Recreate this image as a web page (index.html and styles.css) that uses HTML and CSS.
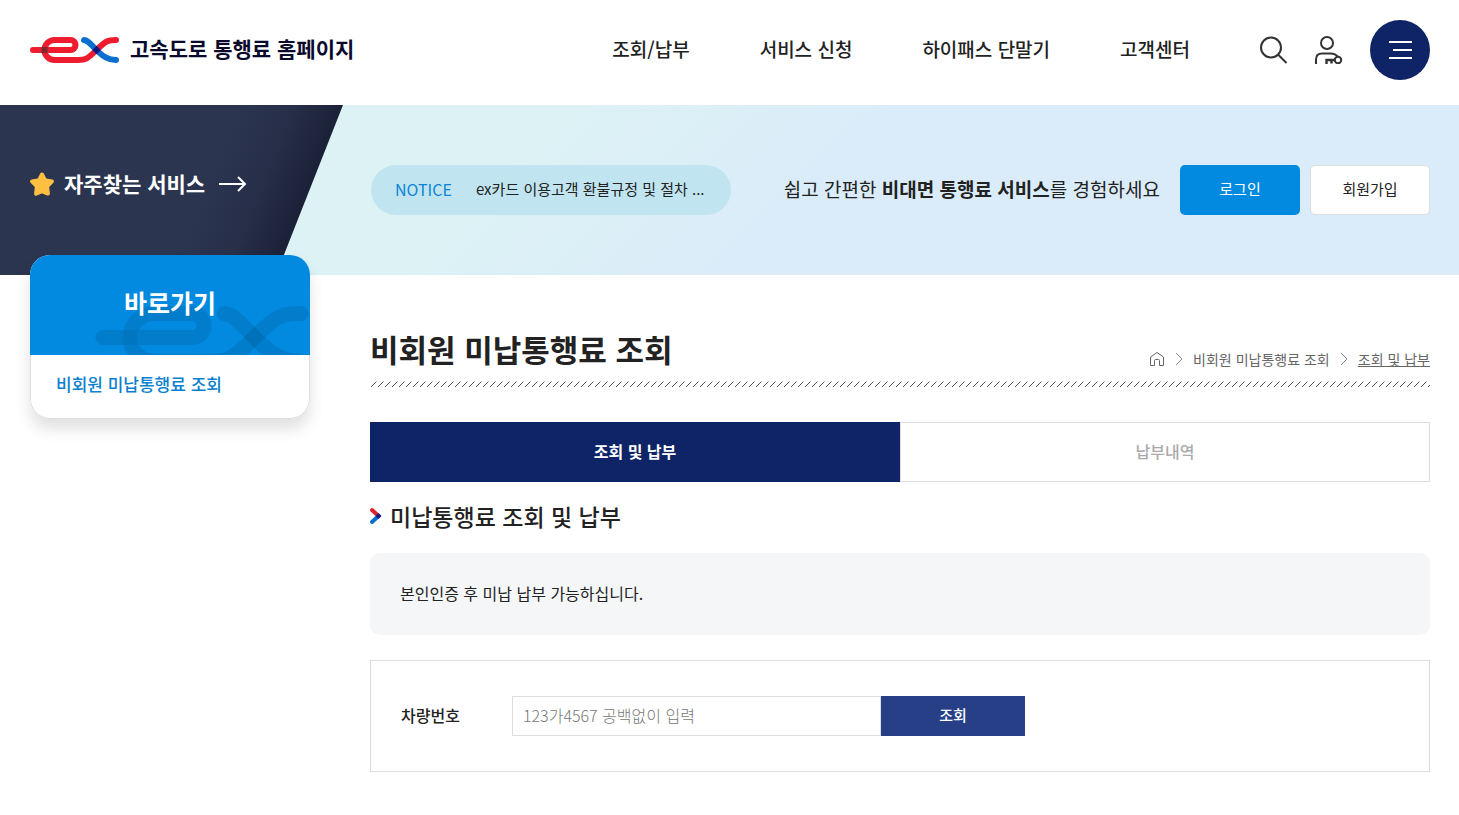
FILE: index.html
```html
<!DOCTYPE html>
<html lang="ko">
  <head>
    <meta charset="UTF-8" />
    <meta name="viewport" content="width=device-width, initial-scale=1.0" />
    <title>고속도로 통행료 홈페이지</title>
    <link rel="stylesheet" href="styles.css">
  </head>
  <body>
    <header class="header">
      <a href="#" class="logo">
        <svg class="logo-mark" viewBox="0 0 90 28" aria-hidden="true">
          <g fill="none" stroke-width="6" stroke-linecap="round">
            <path stroke="#ee1c2e" d="M3 14H40.500a5 5 0 0 0 0-10H24.500a10 10 0 0 0 0 20H48C55 24 57 23.500 66.500 14S78 4 86 4" />
            <path stroke="#0b6fd0" d="M54 4C58 4.500 60 7.500 66.500 14S78 24 86 24" />
          </g>
          <path fill="#7c2630" d="M11.500 11h6v6h-6z" />
          <path fill="#14147c" d="M66.500 9.800l4.200 4.200-4.200 4.300-4.200-4.300z" />
        </svg>
        <span>고속도로 통행료 홈페이지</span>
      </a>
      <nav class="nav">
        <a href="#">조회/납부</a>
        <a href="#">서비스 신청</a>
        <a href="#">하이패스 단말기</a>
        <a href="#">고객센터</a>
      </nav>
      <div class="tools">
        <button type="button" class="icon-btn" aria-label="검색">
          <svg width="28" height="28" viewBox="0 0 28 28" fill="none" stroke="#333" stroke-width="2">
            <circle cx="11" cy="11.500" r="10" />
            <path d="M18 18.500L26.500 27" />
          </svg>
        </button>
        <button type="button" class="icon-btn" aria-label="로그인">
          <svg width="28" height="28" viewBox="0 0 28 28" fill="none" stroke="#333" stroke-width="2">
            <circle cx="12" cy="7" r="6" />
            <path d="M1 28v-4.500Q1 17.500 7 17.500h8.500q5 0 7.500 3.500" />
            <circle cx="23" cy="24" r="3.200" />
            <path d="M20 24h-8.500v4M16.500 24v3.500" stroke-width="2.400" />
          </svg>
        </button>
        <button type="button" class="menu-btn" aria-label="전체메뉴">
          <svg width="24" height="18" viewBox="0 0 24 18" stroke="#fff" stroke-width="2">
            <path d="M1 1h23M5 9h19M1 17h23" />
          </svg>
        </button>
      </div>
    </header>

    <section class="banner">
      <a href="#" class="favorite">
        <svg width="24" height="24" viewBox="0 0 24 24" aria-hidden="true">
          <path fill="#ffbf43" stroke="#ffbf43" stroke-width="4" stroke-linejoin="round" d="M12 2.500l2.900 5.700 7 1.200-4.800 5 .8 7.200-5.900-2.500-5.900 2.500.8-7.200-4.800-5 7-1.200z" />
        </svg>
        <span>자주찾는 서비스</span>
        <svg class="arrow" width="28" height="16" viewBox="0 0 28 16" fill="none" stroke="#fff" stroke-width="2" aria-hidden="true">
          <path d="M0 8h26M19 1l7 7-7 7" />
        </svg>
      </a>
      <a href="#" class="notice">
        <span class="notice-label">NOTICE</span>
        <span class="notice-text">ex카드 이용고객 환불규정 및 절차 ...</span>
      </a>
      <div class="member">
        <p>쉽고 간편한 <strong>비대면 통행료 서비스</strong>를 경험하세요</p>
        <button type="button" class="btn btn-login">로그인</button>
        <button type="button" class="btn btn-join">회원가입</button>
      </div>
    </section>

    <div class="container">
      <aside class="side">
        <div class="side-title">
          <svg class="side-mark" viewBox="0 0 90 28" aria-hidden="true">
            <g fill="none" stroke="#000" stroke-opacity="0.090" stroke-width="6.300" stroke-linecap="round">
              <path d="M3.200 14H40.500a5 5 0 0 0 0-10H24.500a10 10 0 0 0 0 20H48C55 24 57 23.500 66.500 14S78 4 86 4" />
              <path d="M54 4C58 4.500 60 7.500 66.500 14S78 24 86 24" />
            </g>
            <path fill-opacity="0.060" d="M11.500 11h6v6h-6z" />
          </svg>
          <h2>바로가기</h2>
        </div>
        <ul class="side-menu">
          <li><a href="#">비회원 미납통행료 조회</a></li>
        </ul>
      </aside>

      <main class="content">
        <div class="page-head">
          <h1>비회원 미납통행료 조회</h1>
          <nav class="breadcrumb">
            <a href="#" aria-label="홈">
              <svg width="16" height="16" viewBox="0 0 16 16" fill="none" stroke="#666">
                <path d="M1.500 6L8 1.500 14.500 6v8.500h-4V9.500q0-1-1-1h-3q-1 0-1 1v5h-4z" />
              </svg>
            </a>
            <svg width="8" height="14" viewBox="0 0 8 14" fill="none" stroke="#888" aria-hidden="true"><path d="M1 1l6 6-6 6" /></svg>
            <a href="#">비회원 미납통행료 조회</a>
            <svg width="8" height="14" viewBox="0 0 8 14" fill="none" stroke="#888" aria-hidden="true"><path d="M1 1l6 6-6 6" /></svg>
            <a href="#" class="current">조회 및 납부</a>
          </nav>
        </div>
        <svg class="hatch" aria-hidden="true">
          <defs>
            <pattern id="hatch" width="7" height="6" patternUnits="userSpaceOnUse">
              <path d="M0.500 6.500L6.500 0.500" stroke="#555" />
            </pattern>
          </defs>
          <rect width="100%" height="6" fill="url(#hatch)" />
        </svg>

        <div class="tabs">
          <button type="button" class="tab active">조회 및 납부</button>
          <button type="button" class="tab">납부내역</button>
        </div>

        <h3 class="section-title">
          <svg width="12" height="18" viewBox="0 0 12 18" fill="none" stroke-width="4" aria-hidden="true">
            <path stroke="#e0202f" stroke-linecap="round" d="M2 3l6.500 6" />
            <path stroke="#0b6fd0" stroke-linecap="round" d="M2 15l6.500-6" />
            <path fill="#1a1a80" d="M8.500 6l3 3-3 3-3-3z" />
          </svg>
          미납통행료 조회 및 납부
        </h3>

        <p class="guide">본인인증 후 미납 납부 가능하십니다.</p>

        <form class="search">
          <label for="car-number">차량번호</label>
          <input type="text" id="car-number" name="carNumber" placeholder="123가4567 공백없이 입력" />
          <button type="button">조회</button>
        </form>
      </main>
    </div>
  </body>
</html>
```
FILE: styles.css
```css
/* Reset styles */
*,
*::before,
*::after {
  margin: 0;
  padding: 0;
  box-sizing: border-box;
}

body {
  font-family: "Noto Sans CJK KR", sans-serif;
  font-size: 16px;
  line-height: 24px;
  color: #222;
  background-color: #fff;
}

a {
  color: inherit;
  text-decoration: none;
}

button,
input {
  font-family: inherit;
  font-size: 16px;
}

button {
  border: none;
  background: none;
  cursor: pointer;
}

svg {
  display: block;
  flex-shrink: 0;
}

/* Header */
.header {
  display: flex;
  align-items: center;
  height: 105px;
  padding: 0 29px 5px 30px;
}

.logo {
  display: flex;
  align-items: center;
  gap: 10px;
  font-size: 21px;
  font-weight: 700;
  color: #0a0a2c;
}

.logo span {
  padding-bottom: 4px;
}

.logo-mark {
  width: 90px;
  height: 28px;
}

.nav {
  display: flex;
  gap: 70px;
  margin-left: auto;
  padding-bottom: 2px;
  font-size: 19px;
  font-weight: 500;
}

.tools {
  display: flex;
  align-items: center;
  gap: 27px;
  margin-left: 70px;
}

.menu-btn {
  display: flex;
  align-items: center;
  justify-content: center;
  width: 60px;
  height: 60px;
  border-radius: 50%;
  background-color: #0f2466;
}

/* Banner */
.banner {
  display: flex;
  align-items: center;
  height: 170px;
  padding-right: 29px;
  background: linear-gradient(135deg, #dcf2f5 35%, #daecf9 55%);
}

.favorite {
  display: flex;
  align-items: center;
  gap: 10px;
  width: 343px;
  height: 170px;
  padding: 0 0 12px 30px;
  font-size: 21px;
  font-weight: 700;
  color: #fff;
  background: linear-gradient(112deg, #2c3550 58%, #262e48 72%, #1a2036 84%);
  clip-path: polygon(0 0, 100% 0, 276px 100%, 0 100%);
}

.favorite span {
  padding-bottom: 2px;
}

.arrow {
  margin-left: 4px;
}

.notice {
  display: flex;
  align-items: center;
  gap: 24px;
  width: 360px;
  height: 50px;
  margin-left: 28px;
  padding: 0 24px 2px;
  border-radius: 25px;
  background-color: #c1e5f0;
}

.notice-label {
  color: #0a84d6;
}

.notice-text {
  font-size: 15px;
  white-space: nowrap;
}

.member {
  display: flex;
  align-items: center;
  gap: 10px;
  margin-left: auto;
}

.member p {
  margin-right: 10px;
  padding-bottom: 2px;
  font-size: 19px;
}

.btn {
  width: 120px;
  height: 50px;
  padding-bottom: 4px;
  border-radius: 5px;
  font-size: 15px;
}

.btn-login {
  color: #fff;
  background-color: #028ae1;
}

.btn-join {
  border: 1px solid #ddd;
  color: #222;
  background-color: #fff;
}

/* Body layout */
.container {
  display: flex;
  align-items: flex-start;
  gap: 60px;
  padding: 0 29px 40px 30px;
}

.side {
  position: relative;
  flex-shrink: 0;
  width: 280px;
  margin-top: -20px;
  border-radius: 20px;
  overflow: hidden;
  background-color: #fff;
  box-shadow: 0 10px 15px rgba(0, 0, 0, 0.12);
}

.side-title {
  position: relative;
  height: 100px;
  overflow: hidden;
  color: #fff;
  text-align: center;
  background-color: #028ae1;
}

.side-title h2 {
  position: relative;
  font-size: 25px;
  line-height: 94px;
}

.side-mark {
  position: absolute;
  top: 49px;
  right: -1px;
  width: 216px;
  height: 67px;
}

.side-menu {
  padding: 17px 25px 22px;
  border: 1px solid #ddd;
  border-top: none;
  border-radius: 0 0 20px 20px;
  list-style: none;
  font-size: 17px;
  font-weight: 500;
  color: #0a80cf;
}

.content {
  flex: 1;
  min-width: 0;
}

.page-head {
  display: flex;
  align-items: flex-end;
  justify-content: space-between;
  padding: 51px 0 9px;
}

.page-head h1 {
  font-size: 31px;
  line-height: 46px;
}

.breadcrumb {
  display: flex;
  align-items: center;
  gap: 10px;
  padding-bottom: 1px;
  font-size: 14px;
  color: #666;
}

.current {
  text-decoration: underline;
}

.hatch {
  width: 100%;
  height: 6px;
}

.tabs {
  display: flex;
  margin-top: 35px;
}

.tab {
  flex: 1;
  height: 60px;
  padding-bottom: 2px;
  border: 1px solid #ddd;
  font-weight: 500;
  color: #aaa;
}

.tab.active {
  border-color: #0f2466;
  font-weight: 700;
  color: #fff;
  background-color: #0f2466;
}

.section-title {
  display: flex;
  align-items: center;
  gap: 8px;
  margin: 17px 0 20px;
  font-size: 23px;
  font-weight: 500;
  line-height: 34px;
}

.guide {
  padding: 28px 30px 30px;
  border-radius: 10px;
  background-color: #f4f6f8;
}

.search {
  display: flex;
  align-items: center;
  margin-top: 25px;
  padding: 35px 30px;
  border: 1px solid #ddd;
}

.search label {
  width: 111px;
  padding-bottom: 2px;
  font-weight: 500;
}

.search input {
  flex: 0 1 369px;
  min-width: 0;
  height: 40px;
  padding: 0 10px 2px;
  border: 1px solid #ddd;
}

.search input::placeholder {
  font-weight: 300;
  color: #777;
}

.search button {
  width: 144px;
  height: 40px;
  padding-bottom: 4px;
  font-size: 15px;
  font-weight: 500;
  color: #fff;
  background-color: #263f87;
}
```
